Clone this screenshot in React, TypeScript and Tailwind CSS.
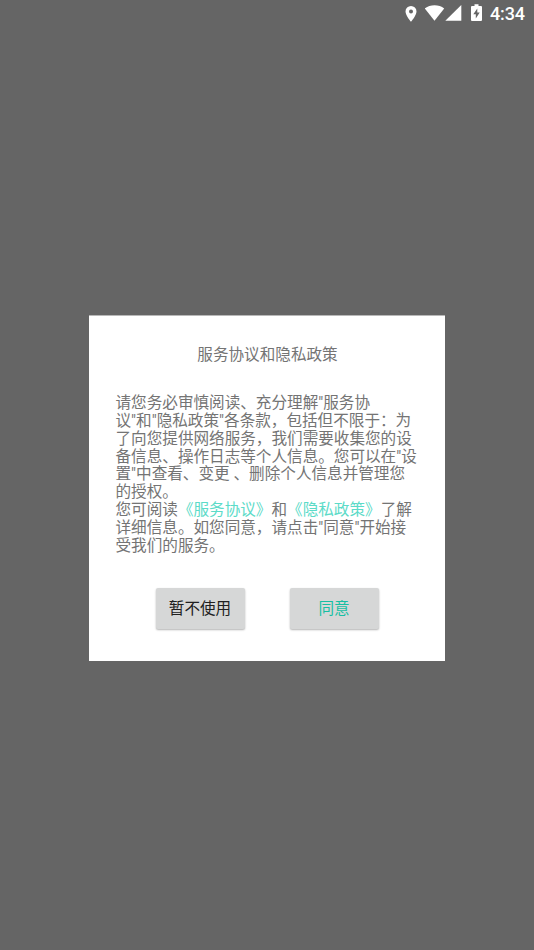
export default function App() {
  const lines = [
    '请您务必审慎阅读、充分理解"服务协',
    '议"和"隐私政策"各条款，包括但不限于：为',
    '了向您提供网络服务，我们需要收集您的设',
    '备信息、操作日志等个人信息。您可以在"设',
    '置"中查看、变更 、删除个人信息并管理您',
    '的授权。',
  ];
  return (
    <div lang="zh-CN" className="flex h-[950px] w-[534px] flex-col bg-[#656565] font-[Roboto,'Noto_Sans_CJK_SC',sans-serif]">
      <header className="flex h-[28px] items-start justify-end pr-[9px] text-white">
        <svg className="mr-[8px] mt-[6px] h-[16px] w-[12px]" viewBox="0 0 12 16" fill="white">
          <path fillRule="evenodd" d="M6 0A5.5 5.5 0 0 0 .5 5.5C.5 9.6 6 15.8 6 15.8S11.5 9.6 11.5 5.5A5.5 5.5 0 0 0 6 0ZM6 3.6a2 2 0 1 1 0 4 2 2 0 0 1 0-4Z" />
        </svg>
        <svg className="mt-[5px] h-[16px] w-[20px]" viewBox="0 0 20 16" fill="white">
          <path d="M9.5 15.8 -.2 3.4C2.5 1.3 5.8.2 9.5 .2s7 1.1 9.7 3.2Z" />
        </svg>
        <svg className="mr-[9px] mt-[5px] h-[16px] w-[17px]" viewBox="0 0 17 16" fill="white"><path d="M.3 15.8H16.3V0Z" /></svg>
        <svg className="mr-[8px] mt-[4px] h-[17px] w-[11px]" viewBox="0 0 11 17" fill="white">
          <path fillRule="evenodd" d="M3.5 .3h4v1.8H10q1 0 1 1v12.8q0 1-1 1H1q-1 0-1-1V3.1q0-1 1-1h2.5ZM6.3 4.5 2.3 10.3h2.5v4.2L8.7 8.6H6.3Z" />
        </svg>
        <span className="text-[18px] font-medium leading-[28px] tracking-[-0.1px]">4:34</span>
      </header>
      <main className="mx-auto mt-[287px] flex h-[346px] w-[356px] flex-col border-t border-[#b8b8b8] bg-white text-[15.6px] text-[#747474]">
        <h1 className="mt-[28px] pl-px text-center leading-[22px]">服务协议和隐私政策</h1>
        <div className="ml-[26.5px] mt-[29px] whitespace-nowrap leading-[17.85px]">
          {lines.map((line) => <p key={line}>{line}</p>)}
          <p>您可阅读<a className="text-[#5cdbc8]">《服务协议》</a>和<a className="text-[#5cdbc8]">《隐私政策》</a>了解</p>
          <p>详细信息。如您同意，请点击"同意"开始接</p>
          <p>受我们的服务。</p>
        </div>
        <div className="ml-[66.5px] mt-[32.5px] flex gap-[45px]">
          <button className="h-[41px] w-[89px] rounded-[2px] bg-[#d6d7d7] pt-[2px] text-[#202020] shadow-[0_1px_2px_#0000004d]">暂不使用</button>
          <button className="h-[41px] w-[89px] rounded-[2px] bg-[#d6d7d7] pt-[2px] text-[#16bfa3] shadow-[0_1px_2px_#0000004d]">同意</button>
        </div>
      </main>
    </div>
  );
}
